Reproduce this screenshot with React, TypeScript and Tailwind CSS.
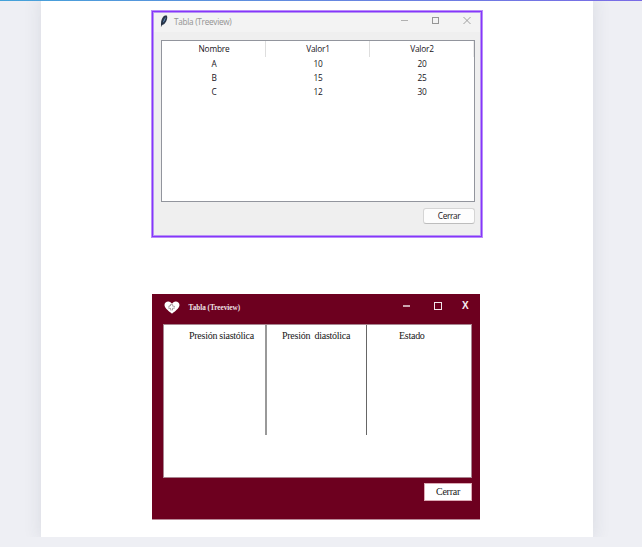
const segoe = "font-['Open_Sans','Noto_Sans',sans-serif]";
const times = "font-['Liberation_Serif',serif]";

const rows = [
  ['A', '10', '20'],
  ['B', '15', '25'],
  ['C', '12', '30'],
];

function Feather() {
  return (
    <svg className="mt-[2px] h-[12px] w-[8px] shrink-0" viewBox="0 0 8 12">
      <path d="M1.2 11.6C.6 8 1.2 4.400 3 2 4.200.6 6 .2 7 .8c.7 2-.1 5-1.900 7.300C4 9.500 2.900 10 2 10.100z" fill="#29364a" />
      <path d="M5.900 1.700C4.300 3 3.200 5.500 2.700 7.700 4.300 6.500 5.600 4 5.900 1.700z" fill="#6fa3d4" />
      <path d="M1.300 11.700 3 6.500 5.500 2" stroke="#1b2433" strokeWidth=".4" fill="none" />
    </svg>
  );
}

function Heart() {
  return (
    <svg className="h-[13px] w-[16px] shrink-0" viewBox="0 0 16 13">
      <path d="M8 12.700C5.500 10.400.5 7.600.5 4 .5 1.700 2.300.4 4.200.4 6 .4 7.300 1.400 8 2.700 8.700 1.400 10 .4 11.800.4c1.900 0 3.700 1.300 3.700 3.600 0 3.600-5 6.400-7.500 8.700z" fill="#fff" />
      <path d="M6.500 3.500h2v1.500h1.700v2.400H8.500V9h-2V7.400H4.800V5h1.700z" fill="none" stroke="#6b5960" strokeWidth=".7" strokeDasharray="1.200 .5" />
    </svg>
  );
}

function OriginalWindow() {
  return (
    <section className={`${segoe} mt-[9px] ml-[110px] flex h-[228px] w-[332px] flex-col border border-[#b98dfa] bg-[#8636fb] p-px text-[8.3px] text-[#17131a]`}>
      <div className="flex flex-1 flex-col border border-[#b795f4] bg-[#efefef]">
        <header className="flex h-[19px] bg-[#f3f3f3] pl-[6px] text-[#929292]">
          <Feather />
          <h1 className="mt-[3px] ml-[6px] w-[60px] text-[8.2px] leading-[11px] tracking-[-0.27px] whitespace-nowrap">Tabla (Treeview)</h1>
          <svg className="mt-[3px] ml-[166px] h-[9px] w-[72px]" viewBox="0 0 72 9" fill="none" stroke="#969696">
            <path d="M1 4.500h7" stroke="#b0b0b0" />
            <rect x="32.500" y="1.500" width="6" height="6" />
            <path d="m63.500 1 7 7m0-7-7 7" strokeWidth=".9" />
          </svg>
        </header>
        <div className="mt-[8px] ml-[7px] h-[162px] w-[314px] border border-[#92959d] bg-white">
          <div className="grid h-[16px] grid-cols-[104px_104px_104px] text-center leading-[16px] tracking-[-0.2px]">
            <span className="border-r border-[#dedede] pl-px">Nombre</span>
            <span className="border-r border-[#dedede] pl-px">Valor1</span>
            <span className="border-r border-[#ececec] pl-px">Valor2</span>
          </div>
          {rows.map((row) => (
            <div key={row[0]} className="grid h-[14px] grid-cols-[104px_104px_104px] text-center leading-[14px] tracking-[-0.25px]">
              {row.map((cell) => <span key={cell}>{cell}</span>)}
            </div>
          ))}
        </div>
        <button className="mt-[6px] ml-[269px] h-[16px] w-[52px] rounded-[3px] border border-[#d5d5d5] border-b-[#bdbdbd] bg-[#fdfdfd] text-center leading-[14px] tracking-[-0.4px]">Cerrar</button>
      </div>
    </section>
  );
}

function RedesignedWindow() {
  return (
    <section className={`${times} mt-[56px] ml-[111px] flex h-[226px] w-[328px] flex-col border-b border-[#b98a98] bg-[#6d001f] text-[10px] tracking-[-0.27px] text-[#171717]`}>
      <header className="flex h-[30px] text-[#eee2e6]">
        <div className="mt-[7px] ml-[12px]"><Heart /></div>
        <h2 className="mt-[8px] ml-[8.500px] w-[60px] text-[7.2px] leading-[12px] font-bold tracking-normal whitespace-nowrap">Tabla (Treeview)</h2>
        <svg className="mt-[7px] ml-[153.500px] h-[11px] w-[44px] shrink-0" viewBox="0 0 44 11" fill="none" stroke="#fff">
          <path d="M1 5h7" strokeWidth="1.300" />
          <rect x="32.500" y="1.500" width="7" height="7" stroke="#f3e6ea" />
        </svg>
        <span className="mt-[6px] ml-[16px] font-['Liberation_Sans',sans-serif] text-[10px] leading-[11px] font-bold text-[#f7eef1]">X</span>
      </header>
      <div className="ml-[11px] h-[154px] w-[309px] border border-[#a88590] bg-white">
        <div className="flex h-[110px] leading-[12px] whitespace-pre">
          <span className="w-[103px] border-r-2 border-[#999] pt-[5px] pl-[25px]">Presión siastólica</span>
          <span className="w-[100px] border-r border-[#666] pt-[5px] pl-[15px]">Presión  diastólica</span>
          <span className="pt-[5px] pl-[32px]">Estado</span>
        </div>
      </div>
      <button className="mt-[5px] ml-[272px] h-[18px] w-[48px] border border-[#dba9b4] bg-white text-center leading-[16px]">Cerrar</button>
    </section>
  );
}

export default function App() {
  return (
    <main className="h-[547px] w-[642px] overflow-hidden bg-[#eeeff4]">
      <div className="h-px bg-linear-to-r from-[#43a2d9] to-[#796be6]" />
      <div className="h-[536px] overflow-hidden px-[41px]">
        <div className="flex h-full w-[552px] flex-col bg-white shadow-[0_0_16px_2px_rgba(45,50,75,0.09)]">
          <OriginalWindow />
          <RedesignedWindow />
        </div>
      </div>
    </main>
  );
}
